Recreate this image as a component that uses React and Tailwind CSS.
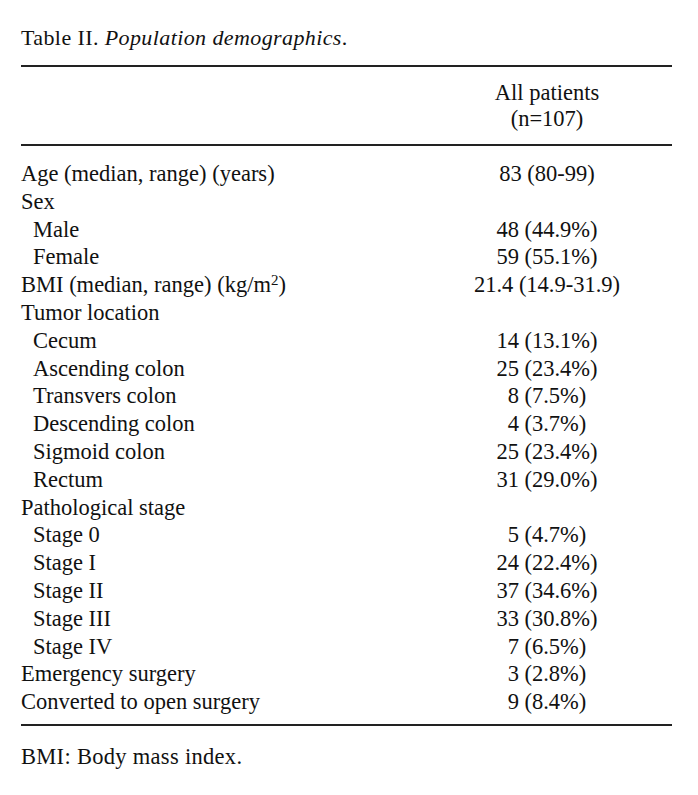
import React from "react";

const rows = [
  { label: "Age (median, range) (years)", value: "83 (80-99)" },
  { label: "Sex" },
  { label: "Male", value: "48 (44.9%)", sub: true },
  { label: "Female", value: "59 (55.1%)", sub: true },
  { label: "BMI", value: "21.4 (14.9-31.9)", bmi: true },
  { label: "Tumor location" },
  { label: "Cecum", value: "14 (13.1%)", sub: true },
  { label: "Ascending colon", value: "25 (23.4%)", sub: true },
  { label: "Transvers colon", value: "8 (7.5%)", sub: true },
  { label: "Descending colon", value: "4 (3.7%)", sub: true },
  { label: "Sigmoid colon", value: "25 (23.4%)", sub: true },
  { label: "Rectum", value: "31 (29.0%)", sub: true },
  { label: "Pathological stage" },
  { label: "Stage 0", value: "5 (4.7%)", sub: true },
  { label: "Stage I", value: "24 (22.4%)", sub: true },
  { label: "Stage II", value: "37 (34.6%)", sub: true },
  { label: "Stage III", value: "33 (30.8%)", sub: true },
  { label: "Stage IV", value: "7 (6.5%)", sub: true },
  { label: "Emergency surgery", value: "3 (2.8%)" },
  { label: "Converted to open surgery", value: "9 (8.4%)" },
];

const App = () => {
  return (
    <div className="min-h-[795px] w-[698px] bg-white pl-[21px] pr-[26px] pt-[24px] text-[#111] font-['Liberation_Serif','Times_New_Roman',serif]">
      <p className="text-[22px] leading-[28px] tracking-[0.4px]">
        Table II. <i>Population demographics</i>.
      </p>

      <div className="mt-[13px] h-[2px] bg-[#222]" />

      <div className="flex pt-[13px] text-[22.5px] leading-[26px]">
        <div className="flex-1" />
        <div className="w-[250px] text-center">
          <div>All patients</div>
          <div>(n=107)</div>
        </div>
      </div>

      <div className="mt-[12px] h-[2px] bg-[#222]" />

      <div className="pt-[14px] text-[22.5px] leading-[27.8px]">
        {rows.map((r, i) => (
          <div key={i} className="flex">
            <div className={r.sub ? "flex-1 pl-[12px]" : "flex-1"}>
              {r.bmi ? (
                <>
                  BMI (median, range) (kg/m<sup className="text-[15px]">2</sup>)
                </>
              ) : (
                r.label
              )}
            </div>
            <div className="w-[250px] text-center">{r.value}</div>
          </div>
        ))}
      </div>

      <div className="mt-[8px] h-[2px] bg-[#222]" />

      <p className="mt-[17px] text-[22.5px] leading-[28px] tracking-[0.3px]">BMI: Body mass index.</p>
    </div>
  );
};

export default App;
